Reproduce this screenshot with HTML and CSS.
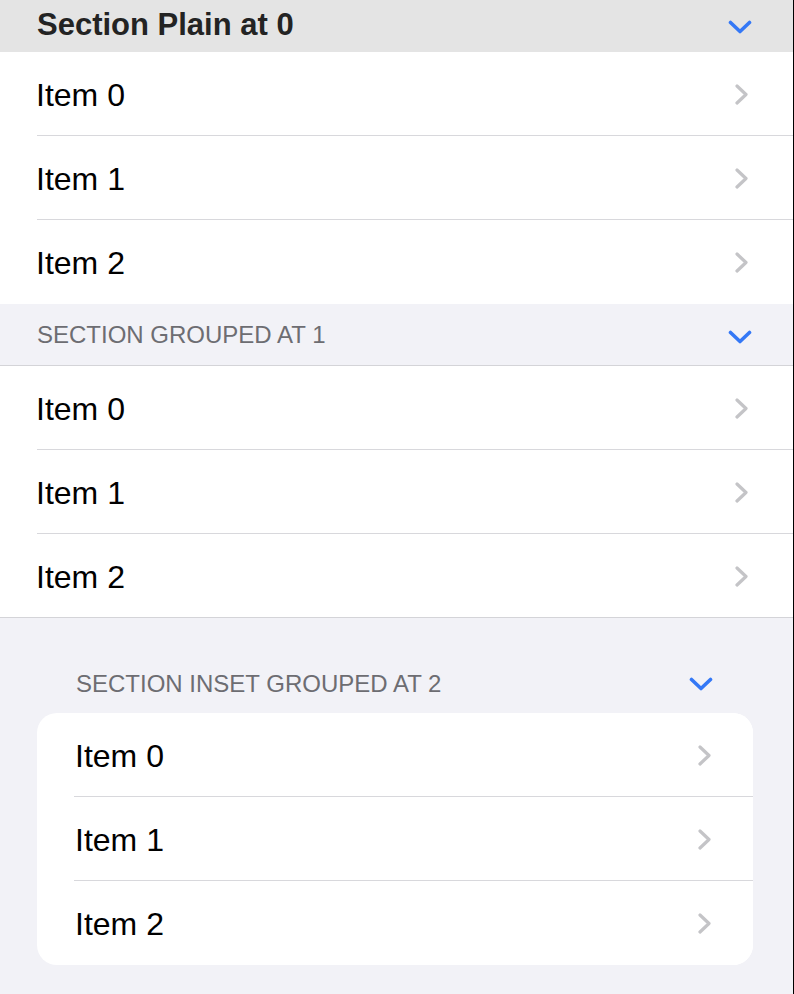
FILE: index.html
```html
<!DOCTYPE html>
<html>

<head>
    <title>Sections</title>
    <link rel="stylesheet" href="styles.css">
</head>

<body>
    <div class="screen">

        <div class="section plain">
            <div class="section-header">
                <span class="header-title">Section Plain at 0</span>
                <svg class="toggle" viewBox="0 0 24 14"><polyline points="2.5,2.5 12,11.5 21.5,2.5" /></svg>
            </div>
            <div class="row"><span class="label">Item 0</span><svg class="disclosure" viewBox="0 0 13 21"><polyline points="2,2 11,10.5 2,19" /></svg></div>
            <div class="row"><span class="label">Item 1</span><svg class="disclosure" viewBox="0 0 13 21"><polyline points="2,2 11,10.5 2,19" /></svg></div>
            <div class="row last"><span class="label">Item 2</span><svg class="disclosure" viewBox="0 0 13 21"><polyline points="2,2 11,10.5 2,19" /></svg></div>
        </div>

        <div class="section grouped">
            <div class="section-header">
                <span class="header-title">SECTION GROUPED AT 1</span>
                <svg class="toggle" viewBox="0 0 24 14"><polyline points="2.5,2.5 12,11.5 21.5,2.5" /></svg>
            </div>
            <div class="row"><span class="label">Item 0</span><svg class="disclosure" viewBox="0 0 13 21"><polyline points="2,2 11,10.5 2,19" /></svg></div>
            <div class="row"><span class="label">Item 1</span><svg class="disclosure" viewBox="0 0 13 21"><polyline points="2,2 11,10.5 2,19" /></svg></div>
            <div class="row last"><span class="label">Item 2</span><svg class="disclosure" viewBox="0 0 13 21"><polyline points="2,2 11,10.5 2,19" /></svg></div>
        </div>

        <div class="section inset">
            <div class="section-header">
                <span class="header-title">SECTION INSET GROUPED AT 2</span>
                <svg class="toggle" viewBox="0 0 24 14"><polyline points="2.5,2.5 12,11.5 21.5,2.5" /></svg>
            </div>
            <div class="card">
                <div class="row"><span class="label">Item 0</span><svg class="disclosure" viewBox="0 0 13 21"><polyline points="2,2 11,10.5 2,19" /></svg></div>
                <div class="row"><span class="label">Item 1</span><svg class="disclosure" viewBox="0 0 13 21"><polyline points="2,2 11,10.5 2,19" /></svg></div>
                <div class="row last"><span class="label">Item 2</span><svg class="disclosure" viewBox="0 0 13 21"><polyline points="2,2 11,10.5 2,19" /></svg></div>
            </div>
        </div>

    </div>
</body>

</html>
```

FILE: styles.css
```css
body {
    margin: 0;
    background-color: #000;
    font-family: "Liberation Sans", Arial, sans-serif;
}

.screen {
    width: 793px;
    min-height: 994px;
    background-color: #f2f2f7;
    overflow: hidden;
}

.section-header {
    display: flex;
    align-items: center;
    justify-content: space-between;
}

.toggle {
    width: 24px;
    height: 14px;
    fill: none;
    stroke: #3478f6;
    stroke-width: 3.6;
    stroke-linecap: round;
    stroke-linejoin: round;
}

.disclosure {
    width: 13px;
    height: 21px;
    margin-bottom: 2px;
    fill: none;
    stroke: #c4c4c7;
    stroke-width: 3.2;
    stroke-linecap: round;
    stroke-linejoin: round;
}

.row {
    box-sizing: border-box;
    height: 84px;
    margin-left: 37px;
    padding-top: 3px;
    padding-right: 45px;
    display: flex;
    align-items: center;
    justify-content: space-between;
    background-color: #ffffff;
    border-bottom: 1px solid #d8d8dc;
}

.row.last {
    border-bottom: none;
}

.label {
    font-size: 32px;
    color: #000;
    margin-left: -1px;
}

/* plain style */
.plain {
    background-color: #ffffff;
}

.plain .section-header {
    height: 52px;
    padding: 0 41px 2px 37px;
    box-sizing: border-box;
    background-color: #e4e4e4;
}

.plain .header-title {
    font-size: 31px;
    font-weight: bold;
    color: #232323;
}

.plain .toggle {
    margin-top: 3px;
}

/* grouped style */
.grouped {
    background-color: #ffffff;
    border-bottom: 1px solid #d4d4d8;
}

.grouped .section-header,
.inset .section-header {
    line-height: 28px;
}

.grouped .section-header {
    padding: 17px 41px 16px 37px;
    background-color: #f2f2f7;
    border-bottom: 1px solid #d4d4d8;
}

.grouped .toggle {
    margin-top: 4px;
}

.header-title {
    font-size: 24px;
    color: #6d6d72;
}

.grouped .row.last {
    height: 83px;
}

/* inset grouped style */
.inset {
    padding: 0 40px 0 37px;
}

.inset .section-header {
    padding: 52px 40px 15px 39px;
}

.card {
    background-color: #ffffff;
    border-radius: 20px;
    overflow: hidden;
}

.card .row {
    margin-left: 37px;
    padding-right: 42px;
}

.card .label {
    margin-left: 1px;
}
```
